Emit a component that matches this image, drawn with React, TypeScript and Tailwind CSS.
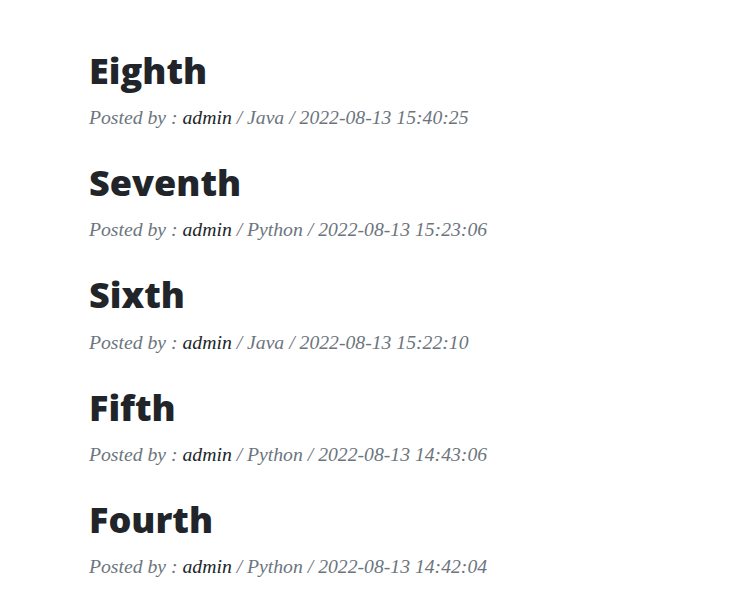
import React from "react";

const posts = [
  { title: "Eighth", cat: "Java", date: "2022-08-13 15:40:25" },
  { title: "Seventh", cat: "Python", date: "2022-08-13 15:23:06" },
  { title: "Sixth", cat: "Java", date: "2022-08-13 15:22:10" },
  { title: "Fifth", cat: "Python", date: "2022-08-13 14:43:06" },
  { title: "Fourth", cat: "Python", date: "2022-08-13 14:42:04" },
];

export default function App() {
  return (
    <div className="min-h-[601px] w-full bg-white">
      <div className="flex flex-col pl-[89px] pt-[20px]">
        {posts.map((p) => (
          <div key={p.title} className="flex flex-col">
            <h2
              className="mt-[29px] mb-[12px] text-[36px] leading-[1.2] font-extrabold text-[#212529]"
              style={{ fontFamily: '"Open Sans", sans-serif' }}
            >
              {p.title}
            </h2>
            <p
              className="text-[19.7px] leading-[27px] italic text-[#6c757d] mb-[1px]"
              style={{ fontFamily: '"Liberation Serif", serif' }}
            >
              Posted by : <span className="text-[#212529]">admin</span> / {p.cat} / {p.date}
            </p>
          </div>
        ))}
      </div>
    </div>
  );
}
